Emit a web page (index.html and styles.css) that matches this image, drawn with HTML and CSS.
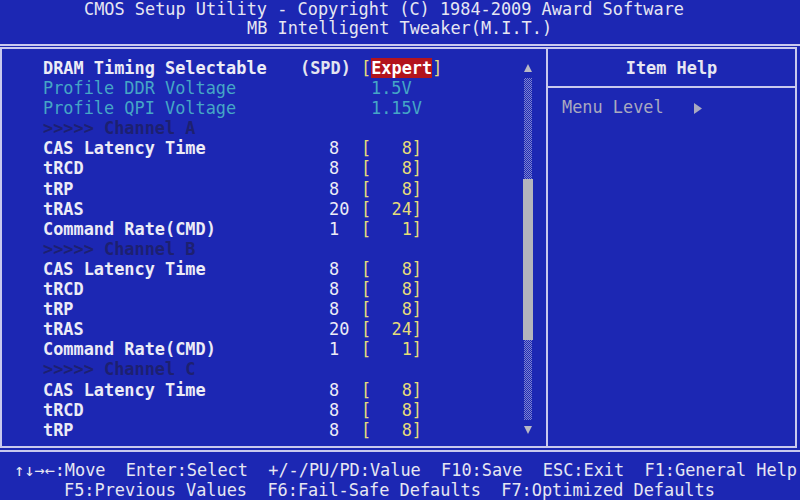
FILE: index.html
```
<!DOCTYPE html>
<html lang="en">
<head>
    <meta charset="UTF-8">
    <title>CMOS Setup Utility - MB Intelligent Tweaker</title>
    <link rel="stylesheet" href="styles.css">
</head>
<body>
    <div class="title">
        <div class="title-line first">CMOS Setup Utility - Copyright (C) 1984-2009 Award Software</div>
        <div class="title-line second">MB Intelligent Tweaker(M.I.T.)</div>
    </div>

    <div class="frame">
        <div class="menu">
            <div class="items">
                <div class="row">
                    <span class="label">DRAM Timing Selectable</span>
                    <span class="mode">(SPD)</span>
                    <span class="setting">[<span class="selected">Expert</span>]</span>
                </div>
                <div class="row info">
                    <span class="label">Profile DDR Voltage</span>
                    <span class="value">1.5V</span>
                </div>
                <div class="row info">
                    <span class="label">Profile QPI Voltage</span>
                    <span class="value">1.15V</span>
                </div>
                <div class="channel">&gt;&gt;&gt;&gt;&gt; Channel A</div>
                <div class="row"><span class="label">CAS Latency Time</span><span class="now">8</span><span class="setting">[   8]</span></div>
                <div class="row"><span class="label">tRCD</span><span class="now">8</span><span class="setting">[   8]</span></div>
                <div class="row"><span class="label">tRP</span><span class="now">8</span><span class="setting">[   8]</span></div>
                <div class="row"><span class="label">tRAS</span><span class="now">20</span><span class="setting">[  24]</span></div>
                <div class="row"><span class="label">Command Rate(CMD)</span><span class="now">1</span><span class="setting">[   1]</span></div>
                <div class="channel">&gt;&gt;&gt;&gt;&gt; Channel B</div>
                <div class="row"><span class="label">CAS Latency Time</span><span class="now">8</span><span class="setting">[   8]</span></div>
                <div class="row"><span class="label">tRCD</span><span class="now">8</span><span class="setting">[   8]</span></div>
                <div class="row"><span class="label">tRP</span><span class="now">8</span><span class="setting">[   8]</span></div>
                <div class="row"><span class="label">tRAS</span><span class="now">20</span><span class="setting">[  24]</span></div>
                <div class="row"><span class="label">Command Rate(CMD)</span><span class="now">1</span><span class="setting">[   1]</span></div>
                <div class="channel">&gt;&gt;&gt;&gt;&gt; Channel C</div>
                <div class="row"><span class="label">CAS Latency Time</span><span class="now">8</span><span class="setting">[   8]</span></div>
                <div class="row"><span class="label">tRCD</span><span class="now">8</span><span class="setting">[   8]</span></div>
                <div class="row"><span class="label">tRP</span><span class="now">8</span><span class="setting">[   8]</span></div>
            </div>

            <!-- barre de défilement -->
            <div class="scrollbar">
                <div class="arrow">
                    <svg width="8" height="8" viewBox="0 0 8 8"><polygon points="4,0 8,8 0,8" fill="#b9b9c4"/></svg>
                </div>
                <div class="track">
                    <div class="thumb"></div>
                </div>
                <div class="arrow">
                    <svg width="8" height="8" viewBox="0 0 8 8"><polygon points="0,0 8,0 4,8" fill="#b9b9c4"/></svg>
                </div>
            </div>
        </div>

        <div class="help">
            <div class="help-title">Item Help</div>
            <div class="help-body">Menu Level   <svg class="level" width="8" height="11" viewBox="0 0 8 11"><polygon points="0,0 8,5.5 0,11" fill="#a9a9c0"/></svg></div>
        </div>
    </div>

    <div class="keys">
        <div class="keys-line one">↑↓→←:Move  Enter:Select  +/-/PU/PD:Value  F10:Save  ESC:Exit  F1:General Help</div>
        <div class="keys-line two">F5:Previous Values  F6:Fail-Safe Defaults  F7:Optimized Defaults</div>
    </div>
</body>
</html>
```

FILE: styles.css
```
body {
    margin: 0;
    width: 800px;
    height: 500px;
    overflow: hidden;
    background-color: #1c27b3;
    color: #e6e6f2;
    font-family: "DejaVu Sans Mono", "Liberation Mono", monospace;
    font-size: 16.9px;
}

/* en-tête */
.title {
    height: 44px;
    border-bottom: 2px solid #c9c9ee;
    line-height: 19px;
}
.title-line {
    white-space: pre;
}
.title-line.first {
    padding-left: 84px;
}
.title-line.second {
    padding-left: 247px;
}

/* cadre principal */
.frame {
    display: flex;
    box-sizing: border-box;
    width: 797px;
    height: 401px;
    margin-top: 1px;
    border: 2px solid #c9c9ee;
}
.menu {
    display: flex;
    width: 544px;
    border-right: 2px solid #c9c9ee;
    padding-top: 9px;
}
.items {
    flex: 1;
    padding-left: 41px;
}
.row {
    display: grid;
    grid-template-columns: 257px 29px 32px 1fr;
    line-height: 20.1px;
    height: 20.1px;
    white-space: pre;
}
.label {
    grid-column: 1;
    font-weight: bold;
    color: #ececf6;
}
.mode {
    grid-column: 2 / 4;
    font-weight: bold;
    color: #e4e4f0;
}
.now {
    grid-column: 3;
    color: #ececf6;
}
.setting {
    grid-column: 4;
    color: #e6dc7a;
}
.selected {
    display: inline-block;
    background-color: #b3141c;
    color: #ffffff;
    font-weight: bold;
}
.info .label {
    color: #45a6c6;
    font-weight: normal;
}
.value {
    grid-column: 4;
    padding-left: 10px;
    color: #45a6c6;
}
.channel {
    line-height: 20.1px;
    height: 20.1px;
    white-space: pre;
    font-weight: bold;
    color: #1d2070;
}

/* scrollbar */
.scrollbar {
    display: flex;
    flex-direction: column;
    width: 10px;
    height: 382px;
    margin-right: 13px;
}
.arrow {
    height: 20px;
    display: flex;
    align-items: center;
    justify-content: center;
}
.track {
    flex: 1;
    margin: 0 1px;
    background: repeating-conic-gradient(#7f84cf 0 25%, transparent 0 50%) 0 0 / 2px 2px;
}
.thumb {
    margin: 101px -1px 0;
    height: 161px;
    background-color: #b4b4bd;
}

/* aide */
.help {
    flex: 1;
}
.help-title {
    box-sizing: border-box;
    height: 39px;
    padding-top: 9px;
    border-bottom: 2px solid #c9c9ee;
    line-height: 20px;
    text-align: center;
    font-weight: bold;
}
.help-body {
    padding: 9px 0 0 14px;
    line-height: 20px;
    white-space: pre;
    color: #a9a9c0;
}
.level {
    vertical-align: -1px;
}

/* touches */
.keys {
    margin-top: 2px;
    border-top: 2px solid #c9c9ee;
    padding-top: 8px;
    line-height: 20px;
}
.keys-line {
    white-space: pre;
}
.keys-line.one {
    padding-left: 14px;
}
.keys-line.two {
    padding-left: 64px;
}
```
